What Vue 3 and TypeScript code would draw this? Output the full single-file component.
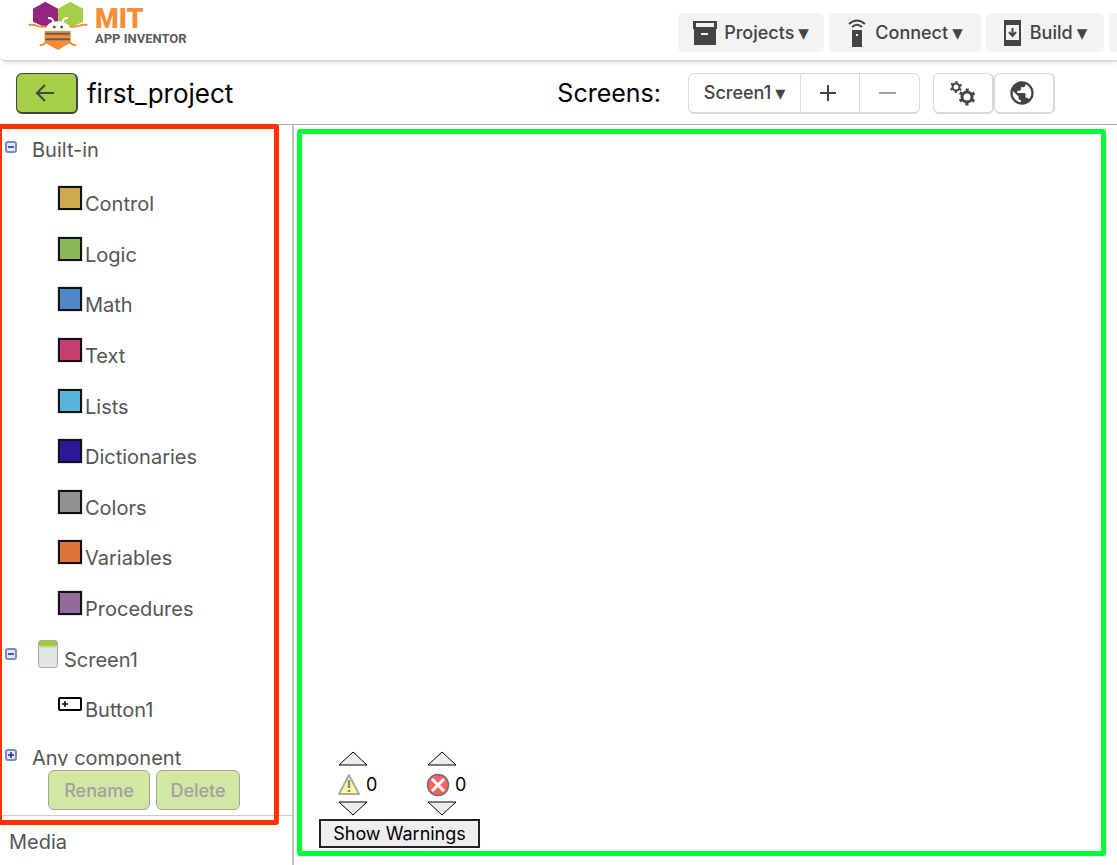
<script setup lang="ts">
import { ref } from 'vue'

interface Drawer { name: string; color: string }

const drawers: Drawer[] = [
  { name: 'Control', color: '#cdab4c' },
  { name: 'Logic', color: '#8ab655' },
  { name: 'Math', color: '#4f87c4' },
  { name: 'Text', color: '#c5406f' },
  { name: 'Lists', color: '#58b4dc' },
  { name: 'Dictionaries', color: '#2d1799' },
  { name: 'Colors', color: '#919191' },
  { name: 'Variables', color: '#dc7439' },
  { name: 'Procedures', color: '#936a9a' },
]

const warnings = ref(0)
const errors = ref(0)
</script>

<template>
  <div class="app">
    <header class="topbar">
      <a class="brand" href="#">
        <svg class="bee" viewBox="84 0 180 150" aria-hidden="true">
          <path d="M99 26 136 5 174 26V84H140L99 65Z" fill="#91257f" />
          <path d="M174 26 211 5 249 26V65L211 84H174Z" fill="#a5cf47" />
          <path d="M86 75C108 71 119 85 138 79M262 75C240 71 229 85 210 79M119 136C132 136 138 129 143 122M229 136C216 136 210 129 205 122" fill="none" stroke="#f98d34" stroke-width="6" />
          <path d="M134 92H212V128L174 150 134 128Z" fill="#f98d34" />
          <path d="M136 101H210M136 118H210" stroke="#5b5b5b" stroke-width="6" />
          <path d="M136 93C137 73 154 64 174 64S210 73 212 93Z" fill="#fff" />
          <path d="M144 54C157 54 158 58 161 69M204 54C191 54 190 58 187 69" fill="none" stroke="#fff" stroke-width="6" />
          <circle cx="163" cy="81" r="4" fill="#444" /><circle cx="185" cy="81" r="4" fill="#444" />
        </svg>
        <span class="wordmark"><b>MIT</b><span>APP INVENTOR</span></span>
      </a>
      <nav class="menu">
        <button class="projects">
          <svg width="24" height="24" viewBox="0 0 24 24"><path fill="#444" fill-rule="evenodd" d="M0 0H24V8H23V24H1V8H0ZM3 2V6H21V2ZM8 12V14H15V12Z" /></svg>
          Projects <span class="caret">▾</span>
        </button>
        <button class="connect">
          <svg width="20" height="28" viewBox="0 0 20 28"><path fill="#444" fill-rule="evenodd" d="M5 11H15V28H5ZM9 15V17H11V15Z" /><path d="M2 5Q10-2 18 5M5 8Q10 3.500 15 8" fill="none" stroke="#444" stroke-width="2" /></svg>
          Connect <span class="caret">▾</span>
        </button>
        <button class="build">
          <svg width="18" height="26" viewBox="0 0 18 26"><path fill="#444" fill-rule="evenodd" d="M1 0H18V26H1ZM3 5V20H16V5Z" /><path d="M9.500 8V16M6 12 9.500 16 13 12" fill="none" stroke="#444" stroke-width="2" /></svg>
          Build <span class="caret">▾</span>
        </button>
        <span class="next"></span>
      </nav>
    </header>

    <div class="toolbar">
      <button class="back" aria-label="Back">
        <svg width="20" height="20" viewBox="0 0 20 20"><path d="M19 10H2M10 2 2 10 10 18" fill="none" stroke="#444" stroke-width="2" /></svg>
      </button>
      <h1>first_project</h1>
      <span class="screens">Screens:</span>
      <div class="group">
        <button class="pick">Screen1 <span class="caret small">▾</span></button>
        <button class="add" aria-label="Add screen"><svg width="18" height="18" viewBox="0 0 18 18"><path d="M9 1V17M1 9H17" stroke="#444" stroke-width="2" /></svg></button>
        <button class="remove" aria-label="Remove screen" disabled><svg width="18" height="18" viewBox="0 0 18 18"><path d="M0 9H17" stroke="#a1a1a1" stroke-width="2" /></svg></button>
      </div>
      <div class="tools">
        <button aria-label="Project properties">
          <svg width="26" height="26" viewBox="0 0 26 26" fill="none" stroke="#444">
            <circle cx="6" cy="7" r="3.500" stroke-width="2" /><circle cx="6" cy="7" r="5" stroke-width="2" stroke-dasharray="2 3.236" stroke-dashoffset="3.618" />
            <circle cx="17" cy="17" r="5" stroke-width="3" /><circle cx="17" cy="17" r="7" stroke-width="3" stroke-dasharray="3 4.330" stroke-dashoffset="5.165" />
          </svg>
        </button>
        <button aria-label="Gallery">
          <svg width="28" height="28" viewBox="0 0 24 24"><path fill="#444" d="M12 2C6.480 2 2 6.480 2 12s4.480 10 10 10 10-4.480 10-10S17.520 2 12 2zm-1 17.930c-3.950-.49-7-3.850-7-7.930 0-.62.080-1.210.210-1.790L9 15v1c0 1.100.9 2 2 2v1.930zm6.900-2.540c-.26-.81-1-1.390-1.900-1.390h-1v-3c0-.55-.45-1-1-1H8v-2h2c.55 0 1-.45 1-1V7h2c1.100 0 2-.9 2-2v-.41c2.930 1.190 5 4.060 5 7.410 0 2.080-.8 3.970-2.100 5.390z" /></svg>
        </button>
      </div>
    </div>

    <main class="body">
      <aside class="sidebar">
        <div class="tree">
          <div class="row head">
            <svg class="toggle" viewBox="0 0 12 12"><rect x="1" y="1" width="10" height="10" rx="2" fill="#e4e8f8" stroke="#7b8cc8" stroke-width="2" /><path d="M3 6H9" stroke="#22b" stroke-width="1.500" /></svg>
            <span>Built-in</span>
          </div>
          <ul class="items">
            <li v-for="d in drawers" :key="d.name" class="row leaf">
              <i class="swatch" :style="{ backgroundColor: d.color }"></i>
              <span>{{ d.name }}</span>
            </li>
            <li class="row screen">
              <svg class="toggle" viewBox="0 0 12 12"><rect x="1" y="1" width="10" height="10" rx="2" fill="#e4e8f8" stroke="#7b8cc8" stroke-width="2" /><path d="M3 6H9" stroke="#22b" stroke-width="1.500" /></svg>
              <i class="phone"></i>
              <span>Screen1</span>
            </li>
            <li class="row leaf">
              <svg class="btn-icon" viewBox="0 0 24 14"><rect x="1" y="1" width="22" height="12" rx="1" fill="#fff" stroke="#000" stroke-width="2" /><path d="M4 7H10M7 4V10" stroke="#000" stroke-width="1.500" /></svg>
              <span>Button1</span>
            </li>
          </ul>
          <div class="row any">
            <svg class="toggle" viewBox="0 0 12 12"><rect x="1" y="1" width="10" height="10" rx="2" fill="#e4e8f8" stroke="#7b8cc8" stroke-width="2" /><path d="M3 6H9M6 3V9" stroke="#22b" stroke-width="1.500" /></svg>
            <span>Any component</span>
          </div>
        </div>
        <div class="actions">
          <button class="rename" disabled>Rename</button>
          <button class="delete" disabled>Delete</button>
        </div>
        <h2 class="media">Media</h2>
        <div class="marker"></div>
      </aside>

      <section class="workspace">
        <div class="issues">
          <div class="counters">
            <div class="counter">
              <button aria-label="Previous warning"><svg width="30" height="16" viewBox="0 0 30 16"><path d="M1 15 15 2 29 15Z" fill="#eee" stroke="#000" /></svg></button>
              <div class="count">
                <svg width="24" height="24" viewBox="0 0 24 24"><path d="M12 2 22 21H2Z" fill="#ffff99" stroke="#aaa" stroke-width="2" stroke-linejoin="round" /><path d="M12 7V15M12 17V19" stroke="#888" stroke-width="2.500" /></svg>
                <span>{{ warnings }}</span>
              </div>
              <button aria-label="Next warning"><svg width="30" height="16" viewBox="0 0 30 16"><path d="M1 1 15 14 29 1Z" fill="#eee" stroke="#000" /></svg></button>
            </div>
            <div class="counter">
              <button aria-label="Previous error"><svg width="30" height="16" viewBox="0 0 30 16"><path d="M1 15 15 2 29 15Z" fill="#eee" stroke="#000" /></svg></button>
              <div class="count">
                <svg width="24" height="24" viewBox="0 0 24 24"><circle cx="12" cy="12" r="10.500" fill="#ff6161" stroke="#707070" stroke-width="1.500" /><path d="M6 6 18 18M18 6 6 18" stroke="#fff" stroke-width="3" /></svg>
                <span>{{ errors }}</span>
              </div>
              <button aria-label="Next error"><svg width="30" height="16" viewBox="0 0 30 16"><path d="M1 1 15 14 29 1Z" fill="#eee" stroke="#000" /></svg></button>
            </div>
          </div>
          <button class="show">Show Warnings</button>
        </div>
      </section>
    </main>
  </div>
</template>

<style>
body { background: #fff; }
</style>

<style scoped>
.app, .app * { box-sizing: border-box; }
.app { display: flex; flex-direction: column; height: 100vh; overflow: hidden; font-family: Inter, "Open Sans", sans-serif; color: #000; }
button { display: flex; align-items: center; justify-content: center; margin: 0; padding: 0; border: 0; background: none; font: inherit; color: #444; white-space: nowrap; }
svg { display: block; flex: none; }
h1, h2, ul { margin: 0; padding: 0; font-weight: 400; }
.caret { margin-left: 4px; font-family: "DejaVu Sans", sans-serif; font-size: 21px; line-height: 20px; font-weight: 400; }
.small { font-size: 20px; }

.topbar { display: flex; justify-content: space-between; height: 62px; flex: none; border-bottom: 2px solid #d9d9d9; border-radius: 0 0 0 6px; box-shadow: 0 2px 5px #00000014; }
.brand { display: flex; align-items: flex-start; gap: 7px; padding-left: 28px; text-decoration: none; }
.bee { width: 60px; height: 50px; }
.wordmark { display: flex; flex-direction: column; padding-top: 6px; font-family: Roboto, sans-serif; font-weight: 700; font-size: 13px; line-height: 14px; color: #5b5b5b; white-space: nowrap; }
.wordmark b { font-weight: 900; font-size: 27px; line-height: 26px; color: #f98d34; }
.menu { display: flex; gap: 5px; padding-top: 13px; font-size: 18px; font-weight: 500; }
.menu button { height: 39px; border-radius: 5px; background: #f3f3f3; }
.menu svg { margin-right: 7px; }
.projects { width: 146px; }
.connect { width: 152px; }
.menu .connect svg { margin-right: 8px; }
.build { width: 118px; }
.menu .build svg { margin-right: 9px; }
.next { width: 8px; height: 39px; border-radius: 5px 0 0 5px; background: #f3f3f3; }

.toolbar { display: flex; align-items: center; height: 63px; flex: none; padding: 0 62px 0 16px; border-bottom: 1px solid #aaa; }
.toolbar button { height: 41px; }
.toolbar .back { width: 62px; padding-right: 4px; border: 1px solid #444; border-width: 1px 2px 2px 1px; border-radius: 6px; background: #a5cf47; }
h1 { margin-left: 9px; font-size: 26px; }
.screens { margin-left: auto; margin-right: 27px; font-size: 25px; }
.group { display: flex; border: 1px solid #d9d9d9; border-bottom-width: 2px; border-radius: 6px; font-size: 18px; font-weight: 500; }
.toolbar .group button { height: 38px; }
.pick { width: 111px; }
.toolbar .group .add { width: 60px; padding-right: 4px; border: solid #d9d9d9; border-width: 0 1px; }
.remove { width: 59px; padding-right: 4px; }
.tools { display: flex; margin-left: 13px; }
.tools button { width: 61px; border: 1px solid #d9d9d9; border-width: 1px 2px 2px 1px; border-radius: 6px; }
.tools button:last-child { padding-right: 4px; }

.body { display: flex; flex: 1; min-height: 0; }
.sidebar { position: relative; display: flex; flex-direction: column; width: 294px; flex: none; border-right: 2px solid #c4c4c4; color: #555; font-size: 20px; }
.tree { flex: 1; min-height: 0; overflow: hidden; }
.row { display: flex; align-items: flex-start; list-style: none; line-height: 50px; padding-left: 5px; }
.toggle { width: 12px; height: 12px; margin: 14px 15px 0 0; }
.head { height: 54px; }
.head .toggle { margin-top: 16px; }
.head span { height: 50px; }
.items { display: grid; grid-auto-rows: 1fr; height: 557px; }
.leaf { gap: 3px; padding-left: 58px; }
.swatch { width: 24px; height: 24px; margin-top: 7px; border: 2px solid #111; outline: 1px solid #dfe5ef; }
.screen .toggle { margin: 13px 21px 0 0; }
.phone { width: 20px; height: 28px; margin: 5px 6px 0 0; border: 1px solid #aaa; border-radius: 3px; background: linear-gradient(#a5c93a 0 4px, #e3e3e3 7px); }
.btn-icon { width: 24px; height: 14px; margin-top: 12px; }
.any { line-height: 44px; }
.any .toggle { margin-top: 13px; }
.actions { display: flex; gap: 6px; padding: 4px 0 5px 48px; border-bottom: 1px solid #ccc; font-size: 18px; font-weight: 500; }
.actions button { height: 40px; border: 1px solid #a2a69b; border-radius: 6px; background: #d2e7a3; color: #a1a1a1; }
.rename { width: 102px; }
.delete { width: 84px; }
.media { padding-left: 9px; height: 49px; font-size: 20px; line-height: 52px; }
.marker { position: absolute; inset: -1px 13px 40px -3px; border: 5px solid #ff3300; border-radius: 3px; pointer-events: none; }

.workspace { display: flex; flex: 1; align-items: flex-end; margin: 4px 11px 9px 3px; padding: 0 0 3px 17px; border: 5px solid #00ff37; border-radius: 3px; }
.counters { display: flex; gap: 49px; padding: 0 0 2px 19px; }
.counter { width: 40px; }
.count { display: flex; align-items: center; gap: 5px; height: 35px; padding-top: 2px; font-size: 18px; }
.count svg { margin-left: -1px; }
.show { width: 161px; height: 29px; border: 2px solid #222; background: #eee; font-size: 18px; color: #000; }
</style>
